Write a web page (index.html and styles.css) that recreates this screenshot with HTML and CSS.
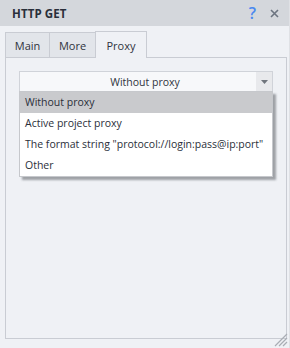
FILE: index.html
```html
<!DOCTYPE html>
<html>
<head>
<meta charset="utf-8">
<link rel="stylesheet" href="styles.css">
</head>
<body>
<div class="window">
  <div class="titlebar">
    <span class="title">HTTP GET</span>
    <span class="tb-icons">
      <span class="help">?</span>
      <svg class="close" width="9" height="9" viewBox="0 0 9 9"><path d="M1 1 L8 8 M8 1 L1 8" stroke="#6c7480" stroke-width="1.6"/></svg>
    </span>
  </div>
  <div class="content">
    <div class="tabs">
      <div class="tab">Main</div>
      <div class="tab">More</div>
      <div class="tab active">Proxy</div>
    </div>
    <div class="panel">
      <div class="combo-wrap">
        <div class="combo">
          <span class="combo-text">Without proxy</span>
          <span class="combo-btn"><svg width="7" height="4" viewBox="0 0 7 4"><path d="M0 0 H7 L3.5 4 Z" fill="#70757d"/></svg></span>
        </div>
        <ul class="dropdown">
          <li class="sel">Without proxy</li>
          <li>Active project proxy</li>
          <li>The format string "protocol://login:pass@ip:port"</li>
          <li>Other</li>
        </ul>
      </div>
    </div>
  </div>
  <svg class="grip" width="14" height="14" viewBox="0 0 14 14">
    <path d="M13 1 L1 13 M13 5 L5 13 M13 9 L9 13" stroke="#a9adb4" stroke-width="1.2"/>
  </svg>
</div>
</body>
</html>
```
FILE: styles.css
```css
* { box-sizing: border-box; }
html, body { margin: 0; padding: 0; }
body {
  width: 290px;
  height: 348px;
  background: #eff1f5;
  font-family: "Open Sans", "Liberation Sans", sans-serif;
  font-size: 10.5px;
  color: #2f3440;
  overflow: hidden;
}
.window {
  position: relative;
  width: 290px;
  height: 348px;
  display: flex;
  flex-direction: column;
  border-right: 1px solid #dfe1e5;
}
.titlebar {
  height: 26px;
  flex: none;
  background: #d4d7dc;
  display: flex;
  align-items: center;
  justify-content: space-between;
  padding: 0 10px 0 12px;
}
.title {
  font-family: "Open Sans", "Liberation Sans", sans-serif;
  font-weight: 700;
  font-size: 11.5px;
  color: #2a2f3a;
  letter-spacing: 0.1px;
}
.tb-icons {
  display: flex;
  align-items: center;
  gap: 14px;
}
.help {
  color: #4a89f0;
  font-family: "Open Sans", sans-serif;
  font-size: 16px;
  line-height: 16px;
  font-weight: 600;
}
.close { display: block; margin-top: 1px; }
.content {
  flex: 1;
  padding: 5px 2px 9px 5px;
  display: flex;
  flex-direction: column;
}
.tabs {
  display: flex;
  align-items: flex-end;
  height: 26px;
  flex: none;
}
.tab {
  height: 25px;
  background: #e2e5ea;
  border: 1px solid #c9ccd3;
  border-bottom: none;
  display: flex;
  align-items: center;
  justify-content: center;
  color: #2f3440;
  font-size: 11px;
}
.tab:nth-child(1) { width: 45px; }
.tab:nth-child(2) { width: 46px; border-left: none; }
.tab.active {
  width: 52px;
  height: 27px;
  margin-bottom: -1px;
  background: #eff1f5;
  position: relative;
  z-index: 1;
  border-left: 1px solid #c9ccd3;
  margin-left: -1px;
}
.panel {
  flex: 1;
  border: 1px solid #c9ccd3;
  padding: 13px 13px;
}
.combo-wrap { position: relative; }
.combo {
  height: 21px;
  border: 1px solid #d0d3d9;
  background: #f7f8fa;
  display: flex;
  align-items: stretch;
}
.combo-text {
  flex: 1;
  display: flex;
  align-items: center;
  justify-content: center;
  padding-left: 14px;
}
.combo-btn {
  width: 16px;
  background: #e8e9ec;
  display: flex;
  align-items: center;
  justify-content: center;
}
.dropdown {
  position: absolute;
  left: 0;
  right: 0;
  top: 20px;
  margin: 0;
  padding: 0;
  list-style: none;
  background: #ffffff;
  border: 1px solid #c6c8cc;
  box-shadow: 3px 3px 2px rgba(60, 64, 72, 0.45);
}
.dropdown li {
  height: 21px;
  line-height: 21px;
  padding-left: 5px;
  white-space: nowrap;
  color: #2a2f3a;
}
.dropdown li.sel { background: #c9cacd; }
.grip {
  position: absolute;
  right: 1px;
  bottom: 1px;
}
```
